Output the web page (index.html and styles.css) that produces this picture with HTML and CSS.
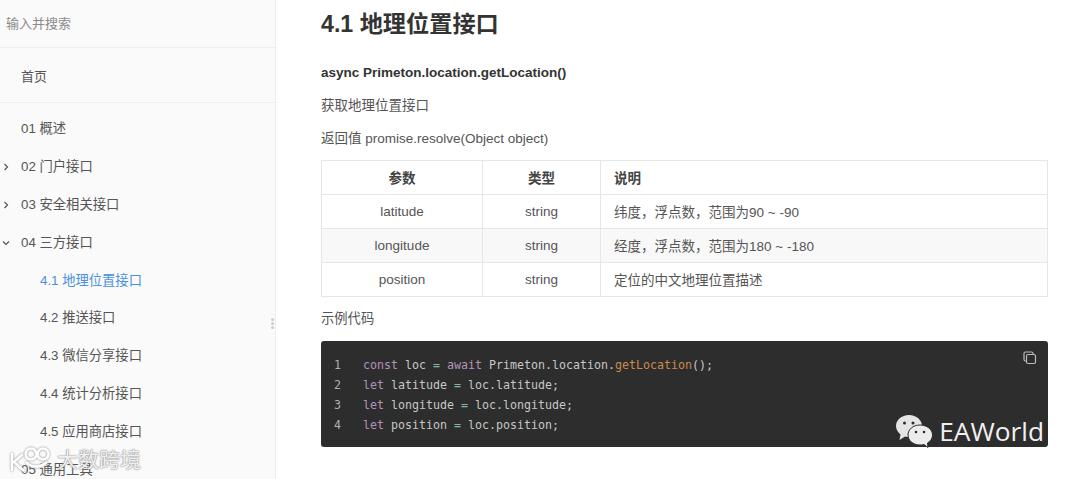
FILE: index.html
```html
<!DOCTYPE html>
<html lang="zh">
<head>
<meta charset="utf-8">
<title>4.1 地理位置接口</title>
<link rel="stylesheet" href="styles.css">
</head>
<body>
<div class="page">
  <aside class="sidebar">
    <div class="search">输入并搜索</div>
    <div class="home">首页</div>
    <nav class="nav">
      <div class="item">01 概述</div>
      <div class="item"><svg class="chev" viewBox="0 0 8 8"><path d="M2.500 1 L5.500 4 L2.500 7"/></svg>02 门户接口</div>
      <div class="item"><svg class="chev" viewBox="0 0 8 8"><path d="M2.500 1 L5.500 4 L2.500 7"/></svg>03 安全相关接口</div>
      <div class="item"><svg class="chev" viewBox="0 0 8 8"><path d="M1 2.500 L4 5.500 L7 2.500"/></svg>04 三方接口</div>
      <div class="item sub active">4.1 地理位置接口</div>
      <div class="item sub">4.2 推送接口</div>
      <div class="item sub">4.3 微信分享接口</div>
      <div class="item sub">4.4 统计分析接口</div>
      <div class="item sub">4.5 应用商店接口</div>
      <div class="item">05 通用工具</div>
    </nav>
    <div class="grip"><i></i><i></i><i></i></div>
    <div class="mark-left">
      <svg class="mark-logo" viewBox="0 0 44 26"><path d="M3 6 V24 M14 7 L5 15 L15 24"/><circle cx="22" cy="7" r="5.500"/><circle cx="34" cy="7" r="5.500"/><path d="M17 15 C22 21 32 21 38 15"/></svg>
      <span>大数跨境</span>
    </div>
  </aside>
  <main class="content">
    <h1 class="title">4.1 地理位置接口</h1>
    <p class="sig">async Primeton.location.getLocation()</p>
    <p class="para">获取地理位置接口</p>
    <p class="para">返回值 promise.resolve(Object object)</p>
    <table class="params">
      <thead>
        <tr><th class="c1">参数</th><th class="c2">类型</th><th class="c3">说明</th></tr>
      </thead>
      <tbody>
        <tr><td class="c1">latitude</td><td class="c2">string</td><td class="c3">纬度，浮点数，范围为90 ~ -90</td></tr>
        <tr class="alt"><td class="c1">longitude</td><td class="c2">string</td><td class="c3">经度，浮点数，范围为180 ~ -180</td></tr>
        <tr><td class="c1">position</td><td class="c2">string</td><td class="c3">定位的中文地理位置描述</td></tr>
      </tbody>
    </table>
    <p class="para example">示例代码</p>
    <div class="code">
      <svg class="copy" viewBox="0 0 14 14"><rect x="1" y="1" width="9" height="9" rx="1.500"/><rect x="3.500" y="3.500" width="9" height="9" rx="1.500"/></svg>
      <div class="line"><span class="num">1</span><span><span class="kw">const</span> loc <span class="op">=</span> <span class="kw">await</span> Primeton.location.<span class="fn">getLocation</span>();</span></div>
      <div class="line"><span class="num">2</span><span><span class="kw">let</span> latitude <span class="op">=</span> loc.latitude;</span></div>
      <div class="line"><span class="num">3</span><span><span class="kw">let</span> longitude <span class="op">=</span> loc.longitude;</span></div>
      <div class="line"><span class="num">4</span><span><span class="kw">let</span> position <span class="op">=</span> loc.position;</span></div>
      <div class="mark-right">
        <svg class="wechat" viewBox="0 0 38 34">
          <path class="bubble" d="M14 1 C6.500 1 1 6 1 12 C1 15.500 3 18.500 5.500 20.500 L4.500 26 L10 22.500 C11.500 23 13 23 15 23 C22 23 27 18 27 12 C27 6 21.500 1 14 1 Z"/>
          <circle class="eye" cx="9.500" cy="9" r="1.500"/><circle class="eye" cx="18" cy="9" r="1.500"/>
          <path class="bubble2" d="M25 11 C18 11 13 15.500 13 21 C13 26.500 18 31 25 31 C26.500 31 27.500 31 29 30.500 L33 33.500 L32.500 29 C35.500 27 37.500 24.500 37.500 21 C37.500 15.500 32 11 25 11 Z"/>
          <circle class="eye" cx="21" cy="18" r="1.300"/><circle class="eye" cx="29" cy="18" r="1.300"/>
        </svg>
        <span>EAWorld</span>
      </div>
    </div>
  </main>
</div>
</body>
</html>
```
FILE: styles.css
```css
* { box-sizing: border-box; }
html, body { margin: 0; padding: 0; }
body {
  width: 1080px;
  height: 479px;
  overflow: hidden;
  background: #fff;
  font-family: "Liberation Sans", "Noto Sans CJK SC", sans-serif;
  color: #333;
  font-size: 13.500px;
}
.page { display: flex; height: 479px; }
.sidebar {
  position: relative;
  width: 276px;
  flex: none;
  background: #fafafa;
  border-right: 1px solid #eee;
  overflow: hidden;
  font-size: 13.300px;
}
.search {
  height: 48px;
  padding: 15px 0 0 6px;
  line-height: 18px;
  font-size: 13px;
  color: #8a8a8a;
  border-bottom: 1px solid #eee;
}
.home {
  height: 55px;
  padding: 20px 0 0 21px;
  line-height: 18px;
  font-size: 13px;
  color: #555;
  border-bottom: 1px solid #eee;
}
.nav { padding-top: 7.400px; }
.item {
  position: relative;
  height: 37.800px;
  line-height: 38px;
  padding-left: 21px;
  color: #555;
}
.item.sub { padding-left: 40px; }
.item.active { color: #4a90e2; }
.chev {
  position: absolute;
  left: 2px;
  top: 15px;
  width: 8px;
  height: 8px;
  fill: none;
  stroke: #555;
  stroke-width: 1.200;
}
.grip {
  position: absolute;
  right: 0;
  top: 318px;
  width: 4px;
  display: flex;
  flex-direction: column;
  gap: 1px;
}
.grip i { display: block; width: 3px; height: 3px; background: #ccc; border-radius: 50%; }
.mark-left {
  position: absolute;
  left: 9px;
  top: 446px;
  display: flex;
  align-items: center;
  gap: 4px;
  color: rgba(255,255,255,.9);
  font-size: 21px;
  line-height: 28px;
  text-shadow: 0 0 2px #888, 0 0 1px #888;
}
.mark-logo {
  width: 44px;
  height: 26px;
  fill: none;
  stroke: #fff;
  stroke-width: 2.500;
  filter: drop-shadow(0 0 1px #888);
}
.content { flex: 1; padding: 0 32px 0 45px; min-width: 0; }
.title {
  margin: 0;
  padding-top: 9px;
  font-size: 23.200px;
  line-height: 31px;
  font-weight: 700;
  color: #333;
}
.sig {
  margin: 24px 0 0;
  line-height: 18px;
  font-weight: 700;
  color: #333;
}
.para {
  margin: 15px 0 0;
  line-height: 18px;
  color: #555;
}
.params {
  margin-top: 12px;
  width: 727px;
  border-collapse: collapse;
  table-layout: fixed;
  color: #555;
}
.params th, .params td {
  border: 1px solid #e6e6e6;
  height: 34px;
  padding: 0 12px 1px;
  font-weight: 400;
  text-align: center;
}
.params th { font-weight: 700; color: #444; padding-bottom: 2px; }
.params .c1 { width: 161px; }
.params .c2 { width: 118px; }
.params .c3 { text-align: left; padding-left: 13px; }
.alt td { background: #f8f8f8; }
.example { margin-top: 13px; font-size: 13.300px; }
.code {
  position: relative;
  margin-top: 13px;
  width: 727px;
  height: 106px;
  padding: 14px 0 0 13px;
  background: #2d2d2d;
  border-radius: 3px;
  font-family: "DejaVu Sans Mono", monospace;
  font-size: 11.630px;
  line-height: 20px;
  color: #c5c8c6;
}
.line { display: flex; height: 20px; }
.num { width: 29px; flex: none; color: #b0b0b0; }
.kw { color: #b294bb; }
.op { color: #7fb8a8; }
.fn { color: #c98a4b; }
.copy {
  position: absolute;
  right: 11px;
  top: 10px;
  width: 14px;
  height: 14px;
  fill: #2d2d2d;
  stroke: #bbb;
  stroke-width: 1.200;
}
.mark-right {
  position: absolute;
  right: 4px;
  bottom: -1px;
  display: flex;
  align-items: center;
  gap: 6px;
  font-family: "Open Sans", "Liberation Sans", sans-serif;
  font-size: 26.300px;
  line-height: 34px;
  color: #f0f0f0;
}
.wechat { width: 38px; height: 34px; }
.bubble { fill: #e4e4e4; }
.bubble2 { fill: #ececec; stroke: #2d2d2d; stroke-width: 1; }
.eye { fill: #2d2d2d; }
```
